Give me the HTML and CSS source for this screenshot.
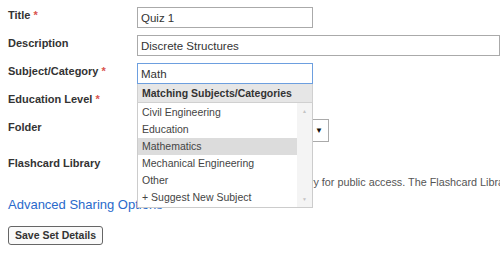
FILE: index.html
```html
<!DOCTYPE html>
<html lang="en">
<head>
    <meta charset="UTF-8">
    <title>Set Details</title>
    <link rel="stylesheet" href="styles.css">
</head>
<body>
    <form class="set-form">
        <div class="row">
            <label class="field-label">Title <span class="req">*</span></label>
            <input class="text-input short" type="text" value="Quiz 1">
        </div>
        <div class="row">
            <label class="field-label">Description</label>
            <input class="text-input long" type="text" value="Discrete Structures">
        </div>
        <div class="row">
            <label class="field-label">Subject/Category <span class="req">*</span></label>
            <div class="suggest-wrap">
                <input class="text-input short focused" type="text" value="Math">
                <div class="suggest-box">
                    <div class="suggest-head">Matching Subjects/Categories</div>
                    <div class="suggest-list">
                        <ul class="suggest-items">
                            <li>Civil Engineering</li>
                            <li>Education</li>
                            <li class="active">Mathematics</li>
                            <li>Mechanical Engineering</li>
                            <li>Other</li>
                            <li>+ Suggest New Subject</li>
                        </ul>
                        <div class="scrollbar">
                            <span class="arrow">&#9650;</span>
                            <span class="arrow">&#9660;</span>
                        </div>
                    </div>
                </div>
            </div>
        </div>
        <div class="row">
            <label class="field-label">Education Level <span class="req">*</span></label>
            <div class="select-box level"><span class="caret">&#9660;</span></div>
        </div>
        <div class="row folder-row">
            <label class="field-label">Folder</label>
            <div class="select-box folder"><span class="caret">&#9660;</span></div>
        </div>
        <div class="row library-row">
            <label class="field-label">Flashcard Library</label>
            <div class="library-text">
                <div class="check-line"><span class="check"></span></div>
                <div class="note">Share this set in the Flashcard Library for public access. The Flashcard Library is searchable by everyone.</div>
            </div>
        </div>
        <a class="adv-link" href="#">Advanced Sharing Options</a>
        <div class="actions">
            <button type="button" class="save-btn">Save Set Details</button>
        </div>
    </form>
</body>
</html>
```

FILE: styles.css
```css
body{
    margin:0;
    font-family: "Liberation Sans", Arial, sans-serif;
    color:#333;
    overflow:hidden;
}
.set-form{
    padding:7px 0 0 8px;
}
.row{
    display:flex;
    align-items:flex-start;
    height:21px;
    margin-bottom:7px;
}
.field-label{
    width:129px;
    flex-shrink:0;
    font-size:11px;
    line-height:17px;
    font-weight:bold;
    color:#333;
}
.req{
    color:#d9534f;
}
.text-input{
    box-sizing:border-box;
    height:21px;
    border:1px solid #aaa;
    padding:0 3px;
    font-family: "Liberation Sans", Arial, sans-serif;
    font-size:11.5px;
    color:#333;
    outline:none;
}
.short{
    width:176px;
}
.long{
    width:400px;
}
.focused{
    border-color:#6d9fdf;
}
.suggest-wrap{
    position:relative;
}
.suggest-box{
    position:absolute;
    left:0;
    top:21px;
    width:176px;
    z-index:5;
    background:#fff;
    font-size:10.5px;
}
.suggest-head{
    height:18px;
    line-height:18px;
    padding-left:4px;
    background:#e6e6e6;
    border:1px solid #d0d0d0;
    border-top:none;
    font-weight:bold;
    color:#333;
    white-space:nowrap;
}
.suggest-list{
    display:flex;
    border:1px solid #ccc;
    border-top:none;
    height:104px;
}
.suggest-items{
    list-style:none;
    margin:0;
    padding:1px 0 0 0;
    flex:1;
}
.suggest-items li{
    height:17px;
    line-height:17px;
    padding-left:4px;
    color:#444;
    white-space:nowrap;
}
.suggest-items li.active{
    background:#dcdcdc;
}
.scrollbar{
    width:15px;
    background:#f4f4f4;
    display:flex;
    flex-direction:column;
    justify-content:space-between;
    align-items:center;
}
.arrow{
    font-size:5px;
    color:#c4c4c4;
    padding:5px 0;
}
.select-box{
    box-sizing:border-box;
    height:21px;
    border:1px solid #aaa;
    font-size:11px;
    line-height:19px;
    padding-left:4px;
    position:relative;
}
.level{
    width:170px;
}
.folder-row{
    height:23px;
}
.folder{
    width:192px;
    height:23px;
    line-height:21px;
}
.caret{
    position:absolute;
    right:5px;
    top:0;
    font-size:8px;
    color:#111;
}
.library-row{
    height:auto;
    padding-top:5px;
    margin-bottom:0;
}
.library-row .field-label{
    line-height:19px;
}
.library-text{
    font-size:10.8px;
    color:#555;
    white-space:nowrap;
    line-height:19px;
}
.check-line{
    height:19px;
}
.check{
    display:inline-block;
    width:11px;
    height:11px;
    margin-top:4px;
    border:1px solid #999;
}
.adv-link{
    display:block;
    margin-top:5px;
    font-size:13px;
    line-height:15px;
    color:#2a6acb;
    text-decoration:none;
}
.actions{
    margin-top:13px;
}
.save-btn{
    font-family: "Liberation Sans", Arial, sans-serif;
    font-size:10.5px;
    font-weight:bold;
    color:#333;
    background:#fafafa;
    border:1px solid #666;
    border-radius:3px;
    height:19px;
    padding:0 6px;
}
```
